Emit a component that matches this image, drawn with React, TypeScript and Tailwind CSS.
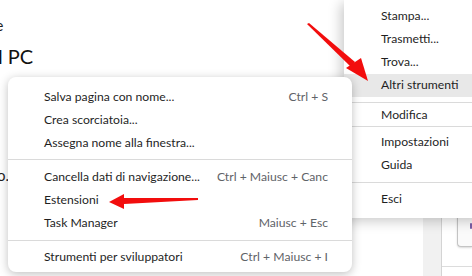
import React from "react";

const subItems = [
  [
    { label: "Salva pagina con nome...", key: "Ctrl + S" },
    { label: "Crea scorciatoia...", key: "" },
    { label: "Assegna nome alla finestra...", key: "" },
  ],
  [
    { label: "Cancella dati di navigazione...", key: "Ctrl + Maiusc + Canc" },
    { label: "Estensioni", key: "" },
    { label: "Task Manager", key: "Maiusc + Esc" },
  ],
  [{ label: "Strumenti per sviluppatori", key: "Ctrl + Maiusc + I" }],
];

function MenuRow({ label, active }: { label: string; active?: boolean }) {
  return (
    <div className={`h-[23px] flex items-center pl-[37px] whitespace-nowrap ${active ? "bg-[#e8e8e8]" : ""}`}>
      {label}
    </div>
  );
}

function Arrows() {
  return (
    <svg className="absolute inset-0 pointer-events-none" width="472" height="276" viewBox="0 0 472 276">
      {/* arrow towards "Altri strumenti" */}
      <polygon fill="#f20d0d" points="307,24 309,23 355,62 351,67" />
      <polygon fill="#f20d0d" points="368,81 361,58 346,68" />
      {/* arrow towards "Estensioni" */}
      <polygon fill="#f20d0d" points="198,198 198,200 124,204 124,198" />
      <polygon fill="#f20d0d" points="109,202 124,194 124,209" />
    </svg>
  );
}

export default function App() {
  return (
    <div className="relative w-[472px] h-[276px] overflow-hidden bg-white font-['Lato',sans-serif] text-[#1f1f1f]">
      {/* page behind the menus */}
      <div className="flex h-full">
        <div className="flex-1 flex flex-col">
          <div className="mt-[15px] -ml-[5px] text-[16px] leading-[20px]">e</div>
          <div className="mt-[9px] -ml-[2px] text-[20px] leading-[24px] text-[#111]">l PC</div>
          <div className="mt-[97px] -ml-[3px] text-[15px] leading-[20px]">o.</div>
        </div>
        <div className="w-[18px] bg-[#f1f1f1]" />
        <div className="w-px bg-[#d4d4d4]" />
        <div className="w-[30px] flex flex-col">
          <div className="ml-[15px] h-[247px] border-l border-b border-[#c4c4c4] rounded-bl-[4px] bg-[#fafafa] shadow-[0_1px_2px_rgba(0,0,0,0.15)] flex items-end pb-[17px] pl-[12px]">
            <span className="w-[4px] h-[6px] rounded-full bg-[#7b5ea7]" />
          </div>
          <div className="mt-[19px] border-t border-[#dcdcdc]" />
        </div>
      </div>

      {/* main menu */}
      <div className="absolute left-[344px] top-0 w-[140px] h-[218px] bg-white shadow-[-3px_3px_12px_rgba(0,0,0,0.22)] text-[12.2px] pt-[5px]">
        <MenuRow label="Stampa..." />
        <MenuRow label="Trasmetti..." />
        <MenuRow label="Trova..." />
        <MenuRow label="Altri strumenti" active />
        <div className="mt-[5px] mb-[1px] border-t border-[#dadada]" />
        <div className="h-[22px] flex items-center pl-[37px]">Modifica</div>
        <div className="mb-[4px] border-t border-[#dadada]" />
        <MenuRow label="Impostazioni" />
        <MenuRow label="Guida" />
        <div className="mt-[5px] mb-[5px] border-t border-[#dadada]" />
        <MenuRow label="Esci" />
      </div>

      {/* submenu */}
      <div className="absolute left-[8px] top-[77px] w-[344px] h-[195px] bg-white rounded-[8px] shadow-[0_2px_10px_rgba(0,0,0,0.25)] text-[12.2px] pt-[9px]">
        {subItems.map((group, gi) => (
          <div key={gi}>
            {gi > 0 && <div className={`${gi === 1 ? "mt-[4px] mb-[6px]" : "mt-[5px] mb-[5px]"} border-t border-[#dadada]`} />}
            {group.map((it) => (
              <div key={it.label} className="h-[23px] flex items-center justify-between pl-[36px] pr-[24px] whitespace-nowrap">
                <span>{it.label}</span>
                <span className="text-[#5f6368]">{it.key}</span>
              </div>
            ))}
          </div>
        ))}
      </div>

      <Arrows />
    </div>
  );
}
